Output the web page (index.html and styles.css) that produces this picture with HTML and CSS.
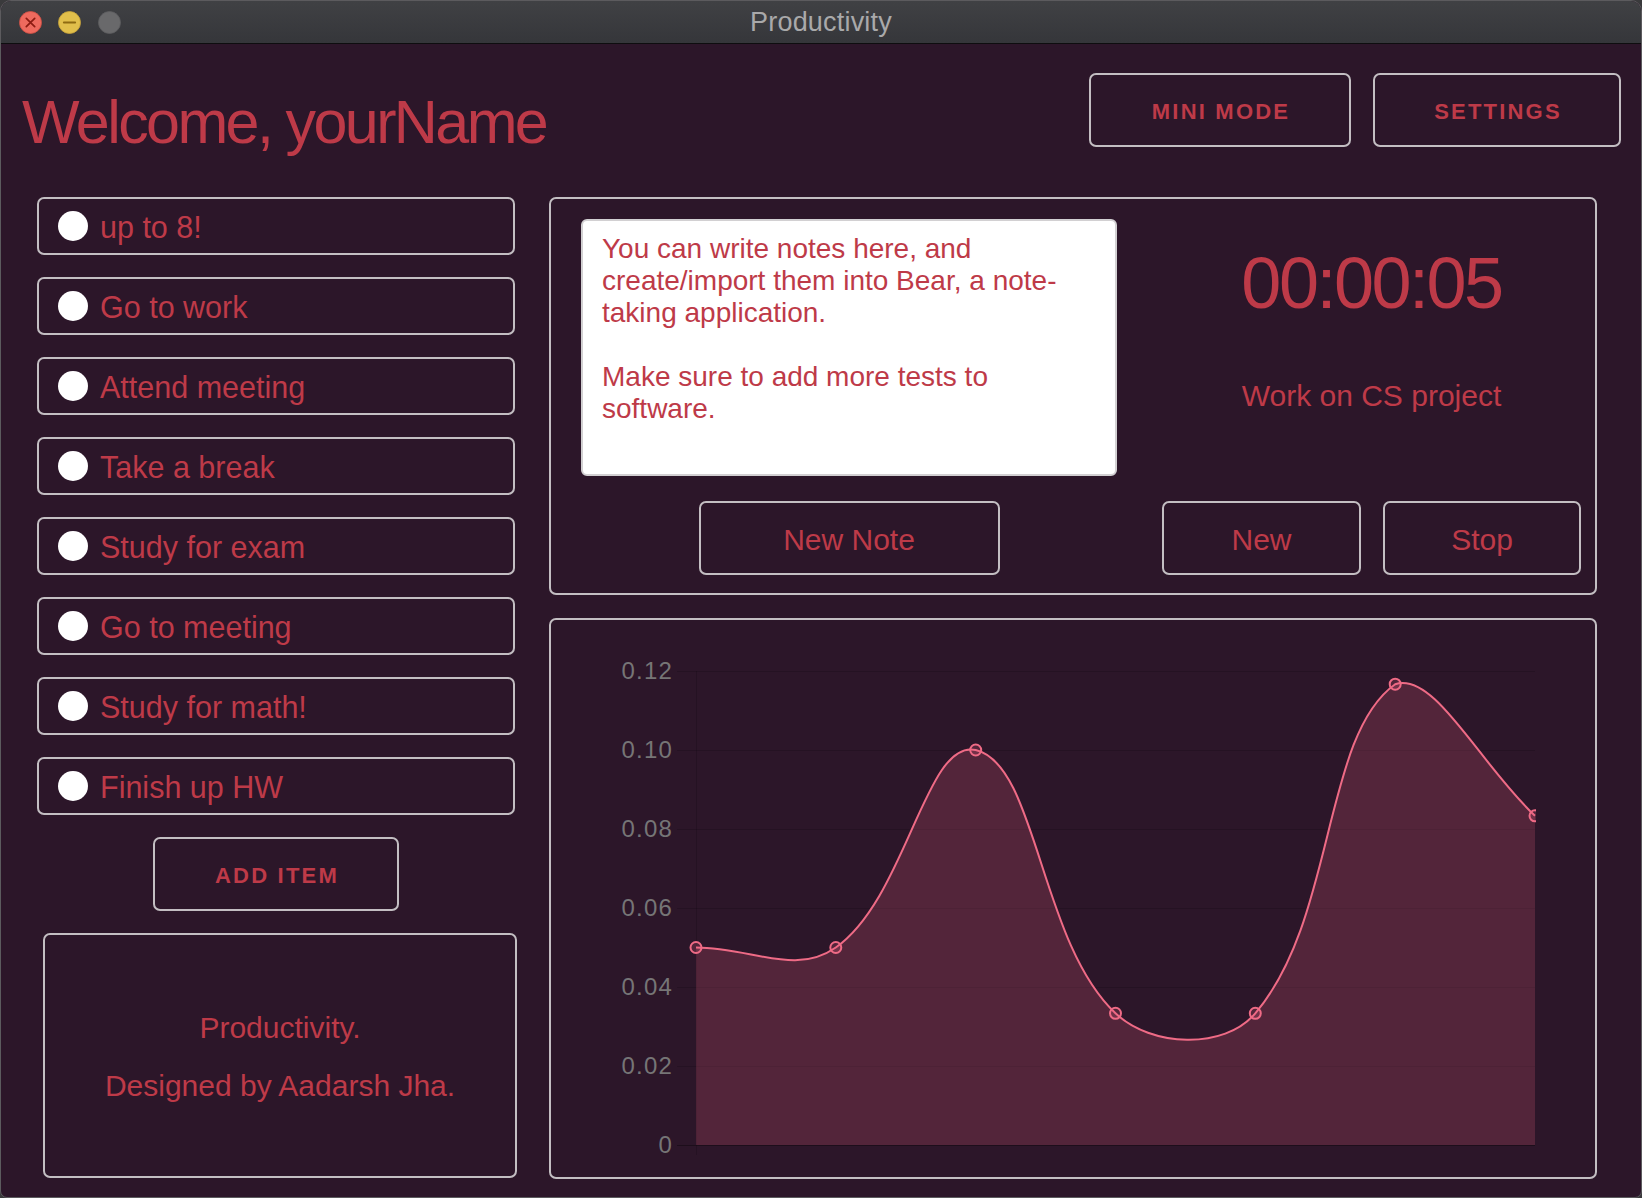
FILE: index.html
```html
<!DOCTYPE html>
<html lang="en">
<head>
<meta charset="utf-8">
<title>Productivity</title>
<link rel="stylesheet" href="styles.css">
</head>
<body>
<div class="window">
  <div class="titlebar">
    <div class="lights">
      <svg class="light" width="23" height="23" viewBox="-11.5 -11.5 23 23"><circle r="11" fill="#ee6a5e" stroke="#d24f44" stroke-width="0.8"/><path d="M-4.2,-4.2 L4.2,4.2 M4.2,-4.2 L-4.2,4.2" stroke="#8c1b12" stroke-width="1.7" stroke-linecap="round"/></svg>
      <svg class="light" width="23" height="23" viewBox="-11.5 -11.5 23 23"><circle r="11" fill="#e1bf4b" stroke="#c9a53a" stroke-width="0.8"/><path d="M-5.6,0 L5.6,0" stroke="#8e6b12" stroke-width="2" stroke-linecap="round"/></svg>
      <svg class="light" width="23" height="23" viewBox="-11.5 -11.5 23 23"><circle r="11" fill="#69696b" stroke="#5d5d5f" stroke-width="0.8"/></svg>
    </div>
    <div class="title">Productivity</div>
    <div class="title-spacer"></div>
  </div>

  <div class="content">
    <header class="header">
      <h1 class="welcome">Welcome, yourName</h1>
      <div class="top-actions">
        <button class="btn btn-caps btn-mini">MINI MODE</button>
        <button class="btn btn-caps btn-settings">SETTINGS</button>
      </div>
    </header>

    <main class="main">
      <section class="left">
        <ul class="todo">
          <li class="todo-item"><span class="dot"></span><span class="todo-text">up to 8!</span></li>
          <li class="todo-item"><span class="dot"></span><span class="todo-text">Go to work</span></li>
          <li class="todo-item"><span class="dot"></span><span class="todo-text">Attend meeting</span></li>
          <li class="todo-item"><span class="dot"></span><span class="todo-text">Take a break</span></li>
          <li class="todo-item"><span class="dot"></span><span class="todo-text">Study for exam</span></li>
          <li class="todo-item"><span class="dot"></span><span class="todo-text">Go to meeting</span></li>
          <li class="todo-item"><span class="dot"></span><span class="todo-text">Study for math!</span></li>
          <li class="todo-item"><span class="dot"></span><span class="todo-text">Finish up HW</span></li>
        </ul>
        <button class="btn btn-caps btn-add">ADD ITEM</button>
        <div class="about">
          <p>Productivity.</p>
          <p>Designed by Aadarsh Jha.</p>
        </div>
      </section>

      <section class="right">
        <div class="panel work">
          <div class="notes-col">
            <div class="notes">You can write notes here, and create/import them into Bear, a note-taking application.<br><br>Make sure to add more tests to software.</div>
            <button class="btn btn-text btn-note">New Note</button>
          </div>
          <div class="timer-col">
            <div class="timer">00:00:05</div>
            <div class="task">Work on CS project</div>
            <div class="timer-btns">
              <button class="btn btn-text btn-new">New</button>
              <button class="btn btn-text btn-stop">Stop</button>
            </div>
          </div>
        </div>

        <div class="panel chart">
          <svg class="chart-svg" width="1044" height="557" viewBox="0 0 1044 557">
            <defs>
              <clipPath id="plotclip"><rect x="0" y="0" width="985" height="557"/></clipPath>
            </defs>
            <g class="grid">
              <line x1="126" y1="51.5" x2="984" y2="51.5"/>
              <line x1="126" y1="130.5" x2="984" y2="130.5"/>
              <line x1="126" y1="209.5" x2="984" y2="209.5"/>
              <line x1="126" y1="288.5" x2="984" y2="288.5"/>
              <line x1="126" y1="367.5" x2="984" y2="367.5"/>
              <line x1="126" y1="446.5" x2="984" y2="446.5"/>
              <line x1="145.5" y1="51" x2="145.5" y2="535"/>
            </g>
            <g class="axis-labels">
              <text x="122" y="59">0.12</text>
              <text x="122" y="138">0.10</text>
              <text x="122" y="217">0.08</text>
              <text x="122" y="296">0.06</text>
              <text x="122" y="375">0.04</text>
              <text x="122" y="454">0.02</text>
              <text x="122" y="533">0</text>
            </g>
            <g clip-path="url(#plotclip)">
              <path class="area" d="M145,525 L145,327.5 C200.9,327.5 243.9,356.4 284.8,327.5 C355.7,277.4 374.6,118.2 424.7,130 C486.4,144.5 488.4,321.6 564.5,393.3 C600.2,427 672.9,430.3 704.3,393.3 C784.8,298.7 771.4,115.6 844.2,64.2 C883.3,51 928.1,143.2 984,195.8 L984,525 Z"/>
              <line class="zero" x1="126" y1="525.5" x2="984" y2="525.5"/>
              <path class="curve" d="M145,327.5 C200.9,327.5 243.9,356.4 284.8,327.5 C355.7,277.4 374.6,118.2 424.7,130 C486.4,144.5 488.4,321.6 564.5,393.3 C600.2,427 672.9,430.3 704.3,393.3 C784.8,298.7 771.4,115.6 844.2,64.2 C883.3,51 928.1,143.2 984,195.8"/>
              <g class="pts">
                <circle cx="145" cy="327.5" r="5.5"/>
                <circle cx="284.8" cy="327.5" r="5.5"/>
                <circle cx="424.7" cy="130" r="5.5"/>
                <circle cx="564.5" cy="393.3" r="5.5"/>
                <circle cx="704.3" cy="393.3" r="5.5"/>
                <circle cx="844.2" cy="64.2" r="5.5"/>
                <circle cx="984" cy="195.8" r="5.5"/>
              </g>
            </g>
          </svg>
        </div>
      </section>
    </main>
  </div>
</div>
</body>
</html>
```

FILE: styles.css
```css
html, body {
  margin: 0;
  padding: 0;
  background: #3a3a3c;
}

body {
  font-family: "Liberation Sans", Arial, Helvetica, sans-serif;
  width: 1642px;
  height: 1198px;
  overflow: hidden;
}

.window {
  width: 1642px;
  height: 1198px;
  box-sizing: border-box;
  background: #2c1629;
  border: 1px solid #5c5b5e;
  border-radius: 11px 11px 7px 7px;
  overflow: hidden;
  display: flex;
  flex-direction: column;
}

/* ---------- title bar ---------- */
.titlebar {
  height: 42px;
  flex: none;
  border-bottom: 1px solid #0e0d0f;
  background: linear-gradient(#404144, #35363a);
  display: grid;
  grid-template-columns: 1fr auto 1fr;
  align-items: center;
}

.lights {
  display: flex;
  gap: 16.5px;
  padding-left: 17.5px;
}

.light {
  display: block;
}

.title {
  font-size: 27px;
  color: #a9a9aa;
  letter-spacing: 0.2px;
  padding-top: 1px;
}

/* ---------- content ---------- */
.content {
  flex: 1;
  padding: 0 20px 0 21px;
}

.header {
  display: flex;
  justify-content: space-between;
  align-items: flex-start;
  height: 153px;
}

.welcome {
  margin: 43px 0 0;
  font-size: 61px;
  line-height: 70px;
  font-weight: normal;
  letter-spacing: -2.6px;
  color: #be3a48;
}

.top-actions {
  display: flex;
  gap: 22px;
  margin-top: 29px;
}

.btn {
  background: transparent;
  border: 2px solid #c3bec2;
  border-radius: 7px;
  color: #be3a48;
  font-family: "Liberation Sans", Arial, Helvetica, sans-serif;
  box-sizing: border-box;
  height: 74px;
  padding: 0;
  cursor: pointer;
}

.btn-caps {
  font-weight: bold;
  font-size: 22px;
  letter-spacing: 2.2px;
  padding: 4px 0 0 2px;
}

.btn-mini { width: 262px; }
.btn-settings { width: 248px; }

.btn-text {
  font-size: 30px;
  padding-top: 3px;
}

/* ---------- main grid ---------- */
.main {
  display: grid;
  grid-template-columns: 480px 1048px;
  column-gap: 32px;
  padding-left: 15px;
  align-items: start;
}

.left {
  display: flex;
  flex-direction: column;
  align-items: flex-start;
  gap: 22px;
}

.todo {
  list-style: none;
  margin: 0;
  padding: 0;
  width: 478px;
  display: flex;
  flex-direction: column;
  gap: 22px;
}

.todo-item {
  height: 58px;
  box-sizing: border-box;
  border: 2px solid #c3bec2;
  border-radius: 7px;
  display: flex;
  align-items: center;
  gap: 12px;
  padding-left: 19px;
  font-size: 30.5px;
  color: #be3a48;
}

.todo-text {
  padding-top: 3px;
}

.dot {
  width: 30px;
  height: 30px;
  border-radius: 50%;
  background: #ffffff;
  flex: none;
}

.btn-add {
  width: 246px;
  margin-left: 116px;
}

.about {
  width: 474px;
  height: 245px;
  margin-left: 6px;
  box-sizing: border-box;
  border: 2px solid #c3bec2;
  border-radius: 7px;
  display: flex;
  flex-direction: column;
  justify-content: center;
  align-items: center;
  gap: 22px;
  color: #be3a48;
  font-size: 30px;
  padding-top: 2px;
}

.about p {
  margin: 0;
  line-height: 36px;
}

/* ---------- right column ---------- */
.right {
  display: flex;
  flex-direction: column;
  gap: 23px;
}

.panel {
  border: 2px solid #c3bec2;
  border-radius: 7px;
  box-sizing: border-box;
}

.work {
  height: 398px;
  display: grid;
  grid-template-columns: 536px 419px;
  column-gap: 45px;
  padding: 20px 14px 18px 30px;
}

.notes-col {
  display: flex;
  flex-direction: column;
  align-items: center;
}

.notes {
  width: 536px;
  height: 257px;
  box-sizing: border-box;
  background: #ffffff;
  border: 2px solid #d2d0d2;
  border-radius: 6px;
  padding: 12px 19px;
  font-size: 28px;
  line-height: 32px;
  color: #be3a48;
}

.btn-note {
  width: 301px;
  margin-top: 25px;
}

.timer-col {
  display: flex;
  flex-direction: column;
  align-items: center;
}

.timer {
  margin-top: 24px;
  font-size: 72px;
  line-height: 80px;
  letter-spacing: -2.5px;
  color: #be3a48;
}

.task {
  margin-top: 55px;
  font-size: 30px;
  line-height: 36px;
  color: #be3a48;
}

.timer-btns {
  margin-top: auto;
  display: flex;
  gap: 22px;
}

.btn-new { width: 199px; }
.btn-stop { width: 198px; }

/* ---------- chart ---------- */
.chart {
  height: 561px;
}

.chart-svg {
  display: block;
}

.grid line {
  stroke: rgba(0, 0, 0, 0.14);
  stroke-width: 1;
}

.zero {
  stroke: rgba(0, 0, 0, 0.32);
  stroke-width: 1;
}

.axis-labels text {
  font-family: "Liberation Sans", Arial, Helvetica, sans-serif;
  font-size: 24px;
  letter-spacing: 1.2px;
  fill: #767576;
  text-anchor: end;
}

.area {
  fill: rgba(240, 100, 130, 0.2);
}

.curve {
  fill: none;
  stroke: #ef6b86;
  stroke-width: 2;
}

.pts circle {
  fill: rgba(240, 100, 130, 0.2);
  stroke: #ef6b86;
  stroke-width: 2;
}
```
